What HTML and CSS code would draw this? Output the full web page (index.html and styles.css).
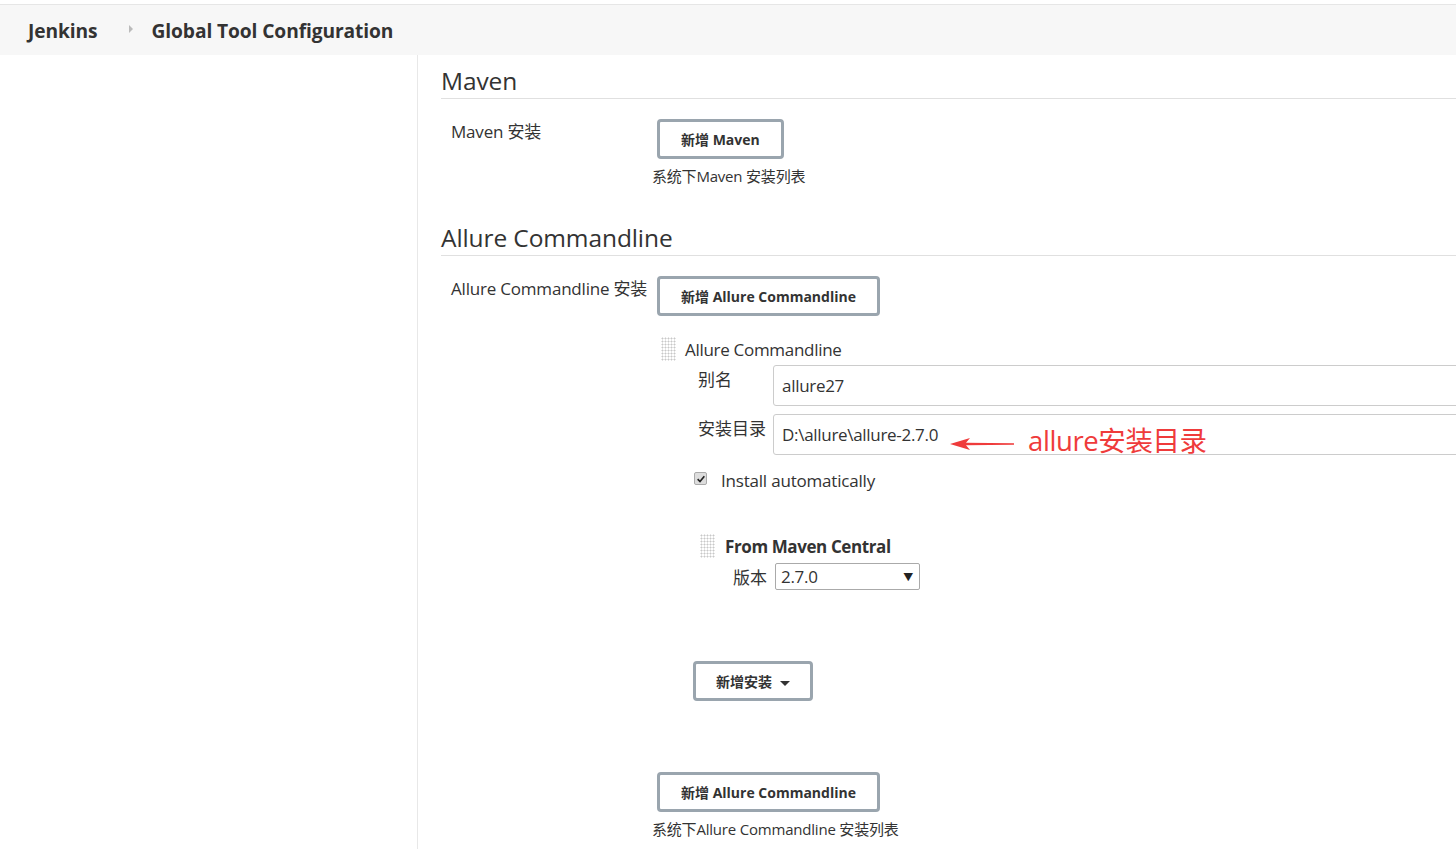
FILE: index.html
```html
<!DOCTYPE html>
<html lang="zh">
<head>
<meta charset="utf-8">
<title>Global Tool Configuration</title>
<link rel="stylesheet" href="styles.css">
</head>
<body>
<header class="topbar">
  <span class="crumb">Jenkins</span>
  <span class="crumb-sep"></span>
  <span class="crumb">Global Tool Configuration</span>
</header>
<div class="page">
  <aside class="sidebar"></aside>
  <main class="main">
    <section class="section">
      <h2 class="section-title">Maven</h2>
      <div class="row">
        <div class="row-label">Maven 安装</div>
        <div class="row-body">
          <button class="btn">新增 Maven</button>
          <div class="help">系统下Maven 安装列表</div>
        </div>
      </div>
    </section>
    <section class="section sec2">
      <h2 class="section-title">Allure Commandline</h2>
      <div class="row">
        <div class="row-label">Allure Commandline 安装</div>
        <div class="row-body">
          <button class="btn">新增 Allure Commandline</button>
          <div class="item">
            <div class="item-head"><span class="handle"></span><span>Allure Commandline</span></div>
            <div class="field">
              <label class="field-label">别名</label>
              <div class="input">allure27</div>
            </div>
            <div class="field">
              <label class="field-label">安装目录</label>
              <div class="input">D:\allure\allure-2.7.0</div>
            </div>
            <div class="check-row"><span class="checkbox"><svg viewBox="0 0 12 12" width="10" height="10"><path d="M2 6.2 L4.8 9 L10 2.8" fill="none" stroke="#222" stroke-width="2"/></svg></span><span>Install automatically</span></div>
            <div class="installer">
              <div class="installer-head"><span class="handle"></span><span class="bold">From Maven Central</span></div>
              <div class="ver-row">
                <span class="ver-label">版本</span>
                <div class="select"><span>2.7.0</span><span class="caret">▼</span></div>
              </div>
            </div>
            <button class="btn btn-add">新增安装 <span class="tri"></span></button>
          </div>
          <button class="btn btn-last">新增 Allure Commandline</button>
          <div class="help">系统下Allure Commandline 安装列表</div>
        </div>
      </div>
      <div class="note">
        <svg class="arrow" width="66" height="14" viewBox="0 0 66 14"><path d="M0 7 L20 1 L16 5.8 L64 6.2 L64 7.8 L16 8.2 L20 13 Z" fill="#ef3b3b"/></svg>
        <span class="note-text">allure安装目录</span>
      </div>
    </section>
  </main>
</div>
</body>
</html>
```
FILE: styles.css
```css
* { box-sizing: border-box; }
html, body { margin: 0; padding: 0; }
body {
  width: 1456px;
  height: 849px;
  overflow: hidden;
  background: #fff;
  color: #333;
  font-family: "Open Sans", "Noto Sans CJK SC", sans-serif;
}
.topbar {
  margin-top: 4px;
  height: 51px;
  border-top: 1px solid #e6e6e6;
  background: #f7f7f7;
  display: flex;
  align-items: center;
  padding-left: 28px;
}
.crumb {
  font-size: 19.2px;
  font-weight: 700;
  color: #333;
  letter-spacing: -0.1px;
}
.crumb-sep {
  width: 0; height: 0;
  border-left: 4px solid #bbb;
  border-top: 4px solid transparent;
  border-bottom: 4px solid transparent;
  margin: 0 19px 2px 31px;
}
.page { display: flex; height: 794px; }
.sidebar { width: 418px; flex: none; border-right: 1px solid #e8e8e8; }
.main { flex: 1; padding-left: 23px; position: relative; }
.section-title {
  margin: 0;
  font-size: 24.5px;
  font-weight: 500;
  line-height: 32px;
  padding-top: 10px;
  padding-bottom: 1px;
  border-bottom: 1px solid #e0e0e0;
  letter-spacing: -0.1px;
}
.sec2 { margin-top: 33px; }
.sec2 .section-title { padding-top: 3px; }
.row { display: flex; padding-top: 20px; }
.row-label {
  width: 216px;
  flex: none;
  padding-left: 10px;
  font-size: 17px;
  line-height: 24px;
  padding-top: 1px;
  letter-spacing: -0.2px;
  white-space: nowrap;
}
.row-body { display: flex; flex-direction: column; align-items: flex-start; }
.btn {
  font-family: inherit;
  background: #fff;
  border: 3px solid #9aa5ae;
  border-radius: 4px;
  height: 40px;
  padding: 0 21px;
  font-size: 14px;
  font-weight: 700;
  color: #333;
  letter-spacing: 0;
}
.help {
  font-size: 15px;
  margin-top: 6px;
  margin-left: -5px;
  letter-spacing: -0.2px;
}
.item { margin-left: 4px; margin-top: 21px; }
.item-head { display: flex; align-items: center; font-size: 17px; letter-spacing: -0.3px; height: 24px; }
.handle {
  width: 15px;
  height: 24px;
  margin-right: 9px;
  background-image: radial-gradient(circle, #c8c8c8 0.9px, transparent 1.1px);
  background-size: 3px 3px;
}
.field { display: flex; margin-top: 4px; margin-left: 37px; }
.field + .field { margin-top: 8px; }
.field-label { width: 75px; font-size: 17px; padding-top: 1px; }
.input {
  width: 720px;
  height: 41px;
  border: 1px solid #ccc;
  border-radius: 3px;
  padding: 8px 8px;
  font-size: 17px;
  line-height: 24px;
  letter-spacing: -0.3px;
}
.check-row { display: flex; align-items: center; margin-left: 33px; margin-top: 14px; font-size: 17px; letter-spacing: -0.2px; }
.checkbox {
  width: 13px; height: 13px;
  border: 1px solid #aaa;
  border-radius: 2px;
  background: #ddd;
  display: flex; align-items: center; justify-content: center;
  margin-right: 14px;
  margin-bottom: 4px;
}
.installer { margin-left: 39px; margin-top: 42px; }
.installer-head { display: flex; align-items: center; font-size: 17px; height: 24px; letter-spacing: -0.4px; }
.installer-head .handle { margin-right: 10px; }
.bold { font-weight: 700; }
.ver-row { display: flex; align-items: center; margin-left: 33px; margin-top: 5px; }
.ver-label { font-size: 17px; width: 42px; }
.select {
  width: 145px;
  height: 27px;
  border: 1px solid #aaa;
  border-radius: 2px;
  display: flex;
  align-items: center;
  justify-content: space-between;
  padding: 0 6px 0 5px;
  font-size: 17px;
  letter-spacing: -0.3px;
}
.caret { font-size: 10px; color: #222; }
.btn-add { margin-left: 32px; margin-top: 71px; padding: 0 20px; }
.tri {
  display: inline-block;
  width: 0; height: 0;
  border-top: 5px solid #333;
  border-left: 5px solid transparent;
  border-right: 5px solid transparent;
  margin-left: 4px;
  vertical-align: middle;
}
.btn-last { margin-top: 71px; }
.note {
  position: absolute;
  left: 532px;
  top: 364px;
  display: flex;
  align-items: center;
}
.arrow { margin-top: 10px; margin-right: 12px; }
.note-text {
  color: #ef3b3b;
  font-size: 27.5px;
  font-family: "Open Sans", "Noto Sans CJK SC", sans-serif;
  letter-spacing: -0.4px;
}
```
